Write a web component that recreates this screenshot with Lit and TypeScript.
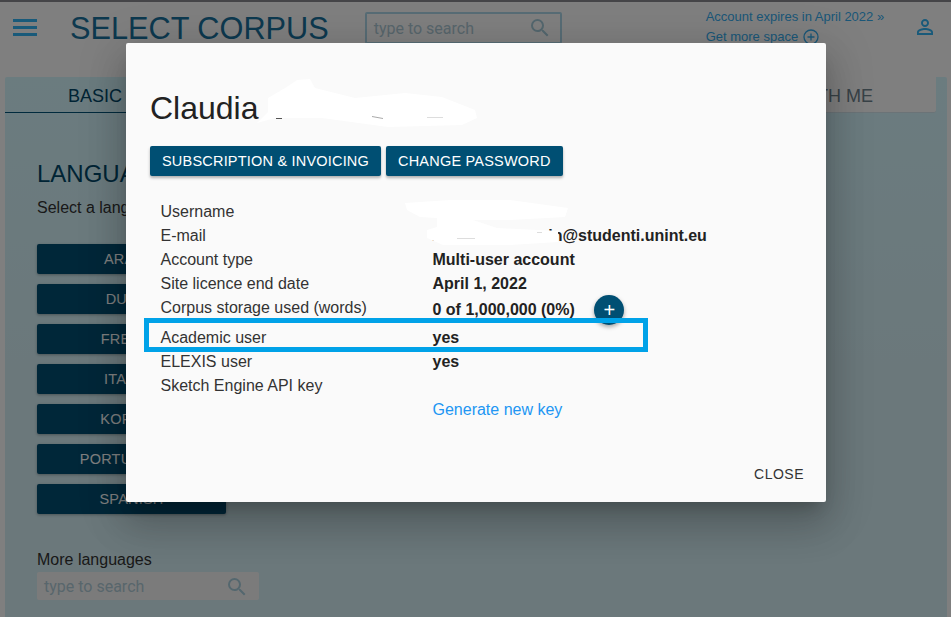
import { LitElement, html, css, svg } from "lit";
import { customElement } from "lit/decorators.js";

const searchIcon = svg`<svg class="search-ico" viewBox="0 0 24 24" width="24" height="24" fill="currentColor"><path d="M15.5 14h-.79l-.28-.27A6.47 6.47 0 0 0 16 9.5 6.5 6.5 0 1 0 9.5 16c1.61 0 3.09-.59 4.23-1.57l.27.28v.79l5 4.99L20.49 19l-4.99-5zm-6 0C7.01 14 5 11.99 5 9.5S7.01 5 9.5 5 14 7.01 14 9.5 11.99 14 9.5 14z"/></svg>`;

const rows: [string, string][] = [
  ["Username", ""],
  ["E-mail", "xxxxxxxxxxxxxin@studenti.unint.eu"],
  ["Account type", "Multi-user account"],
  ["Site licence end date", "April 1, 2022"],
];

@customElement("app-root")
export class AppRoot extends LitElement {
  static styles = css`
    :host {
      display: block;
      position: relative;
      height: 617px;
      overflow: hidden;
      background: #fff;
      font-family: "Liberation Sans", Arial, sans-serif;
      color: #222;
    }
    .page { display: flex; flex-direction: column; height: 617px; }
    .topline { height: 2px; background: #8a8a90; flex: none; }
    header {
      display: flex;
      align-items: flex-start;
      height: 75px;
      flex: none;
    }
    .burger { display: flex; flex-direction: column; gap: 4px; width: 24px; margin: 17px 0 0 13px; }
    .burger i { display: block; height: 3px; background: #33b5f5; }
    h1 { margin: 9px 0 0 33px; font-size: 30.7px; line-height: 36px; font-weight: 400; color: #1a729e; white-space: nowrap; }
    .top-search {
      box-sizing: border-box;
      display: flex;
      align-items: center;
      justify-content: space-between;
      width: 197px;
      height: 32px;
      margin: 10px 0 0 36px;
      padding: 0 8px 0 7px;
      border: 2px solid #afd9ea;
      border-radius: 2px;
    }
    .ph { font-family: Roboto, sans-serif; font-size: 16px; color: #b0ccd8; }
    .search-ico { color: #a8cedd; display: block; }
    .account { margin: 5px 0 0 144px; font-size: 13px; line-height: 20px; color: #36aef0; width: 183px; flex: none; }
    .account div { display: flex; align-items: center; gap: 5px; white-space: nowrap; }
    .user { margin: 13px 0 0 24px; color: #33b5f5; display: block; flex: none; }
    .panel {
      flex: 1;
      margin: 0 4px 0 5px;
      background: linear-gradient(#d6f8ff, #d6f0f6 60%);
      border-radius: 2px 2px 0 0;
    }
    .tabs { display: flex; height: 36px; margin-right: 11px; }
    .tab { font-size: 18px; line-height: 38px; text-align: center; box-sizing: border-box; color: #5a7280; }
    .tab.on { width: 180px; border-bottom: 1px solid #00557a; color: #00486a; }
    .tab.mid { flex: 1; background: #fff; }
    .tab.last { width: 266px; padding-right: 18px; background: #fff; border-bottom: 1px solid #d6e6ee; border-radius: 0 0 3px 0; color: #70848e; }
    .body { padding: 46px 0 0 32px; }
    h2 { margin: 0; font-size: 24px; line-height: 30px; font-weight: 400; color: #00486a; }
    .sub { font-size: 16px; line-height: 20px; margin-top: 9px; color: #333; }
    .langs { display: flex; flex-direction: column; gap: 10px; margin-top: 26px; width: 189px; }
    .lang {
      height: 30px;
      line-height: 30px;
      text-align: center;
      font-size: 14.5px;
      letter-spacing: .2px;
      color: #fff;
      background: #004f73;
      border-radius: 2px;
      box-shadow: 0 1px 3px rgba(0,0,0,.3);
    }
    .more { margin-top: 36px; font-size: 16px; line-height: 20px; color: #333; }
    .more-search {
      box-sizing: border-box;
      width: 222px;
      height: 28px;
      margin-top: 2px;
      padding: 1px 10px 0 7px;
      display: flex;
      align-items: center;
      justify-content: space-between;
      background: #f7f7f7;
      border-radius: 2px;
    }
    .scrim { position: absolute; inset: 0; background: rgba(0,0,0,.5); }
    .modal {
      position: absolute;
      left: 126px;
      top: 43px;
      width: 700px;
      height: 459px;
      box-sizing: border-box;
      background: #fafafa;
      border-radius: 2px;
      padding: 46px 24px 0;
      box-shadow: 0 11px 15px -7px rgba(0,0,0,.2), 0 24px 38px 3px rgba(0,0,0,.14), 0 9px 46px 8px rgba(0,0,0,.12);
    }
    .name { font-size: 32px; line-height: 38px; color: #222; }
    .actions { display: flex; gap: 5px; margin-top: 19px; }
    .btn {
      height: 30px;
      line-height: 30px;
      padding: 0 12px;
      font-size: 14.5px;
      letter-spacing: .2px;
      color: #fff;
      background: #004f73;
      border-radius: 2px;
      box-shadow: 0 2px 3px rgba(0,0,0,.3);
      white-space: nowrap;
    }
    .grid { margin: 24px 0 0 10.5px; font-size: 16px; line-height: 24px; color: #333; }
    .row { display: grid; grid-template-columns: 272px 1fr; height: 24px; white-space: nowrap; }
    .row b { color: #222; font-weight: 700; }
    .row.tall { height: 30px; }
    .val { display: flex; align-items: flex-start; padding-top: 2px; }
    .plus {
      width: 30px;
      height: 30px;
      margin: -3px 0 0 19.5px;
      border-radius: 50%;
      background: #004f73;
      color: #fff;
      font-size: 20px;
      line-height: 30px;
      text-align: center;
      box-shadow: 0 2px 4px rgba(0,0,0,.35);
      flex: none;
    }
    a { color: #2196f3; text-decoration: none; }
    .close {
      position: absolute;
      right: 22px;
      bottom: 18px;
      font-size: 14px;
      letter-spacing: .5px;
      line-height: 20px;
      color: #333;
    }
    .mask { position: absolute; left: 0; top: 0; pointer-events: none; }
    .mark {
      position: absolute;
      left: 144px;
      top: 318px;
      width: 504px;
      height: 34px;
      box-sizing: border-box;
      border: 5px solid #00a2e8;
      pointer-events: none;
    }
  `;

  render() {
    return html`
      <div class="page">
        <div class="topline"></div>
        <header>
          <div class="burger"><i></i><i></i><i></i></div>
          <h1>SELECT CORPUS</h1>
          <div class="top-search"><span class="ph">type to search</span>${searchIcon}</div>
          <div class="account">
            <div>Account expires in April 2022 »</div>
            <div>Get more space
              <svg width="16" height="16" viewBox="0 0 16 16" fill="none" stroke="currentColor" stroke-width="1.3"><circle cx="8" cy="8" r="7"/><path d="M8 4.5v7M4.5 8h7"/></svg>
            </div>
          </div>
          <svg class="user" width="24" height="24" viewBox="0 0 24 24" fill="currentColor"><path d="M12 5.9a2.1 2.1 0 1 1 0 4.2 2.1 2.1 0 0 1 0-4.2m0 9c2.97 0 6.1 1.46 6.1 2.1v1.1H5.9V17c0-.64 3.13-2.1 6.1-2.1M12 4C9.79 4 8 5.79 8 8s1.79 4 4 4 4-1.79 4-4-1.79-4-4-4zm0 9c-2.67 0-8 1.34-8 4v3h16v-3c0-2.66-5.33-4-8-4z"/></svg>
        </header>
        <section class="panel">
          <div class="tabs">
            <div class="tab on">BASIC</div>
            <div class="tab mid">MY CORPORA</div>
            <div class="tab last">SHARED WITH ME</div>
          </div>
          <div class="body">
            <h2>LANGUAGES</h2>
            <div class="sub">Select a language</div>
            <div class="langs">
              ${["ARABIC", "DUTCH", "FRENCH", "ITALIAN", "KOREAN", "PORTUGUESE", "SPANISH"].map(
                (l) => html`<div class="lang">${l}</div>`
              )}
            </div>
            <div class="more">More languages</div>
            <div class="more-search"><span class="ph">type to search</span>${searchIcon}</div>
          </div>
        </section>
      </div>
      <div class="scrim"></div>
      <div class="modal">
        <div class="name">Claudia</div>
        <div class="actions">
          <div class="btn">SUBSCRIPTION &amp; INVOICING</div>
          <div class="btn">CHANGE PASSWORD</div>
        </div>
        <div class="grid">
          ${rows.map(([k, v]) => html`<div class="row"><span>${k}</span><b>${v}</b></div>`)}
          <div class="row tall"><span>Corpus storage used (words)</span><div class="val"><b>0 of 1,000,000 (0%)</b><div class="plus">+</div></div></div>
          <div class="row"><span>Academic user</span><b>yes</b></div>
          <div class="row"><span>ELEXIS user</span><b>yes</b></div>
          <div class="row"><span>Sketch Engine API key</span><b></b></div>
          <div class="row"><span></span><a>Generate new key</a></div>
        </div>
        <div class="close">CLOSE</div>
      </div>
      <svg class="mask" width="951" height="617" viewBox="0 0 951 617" fill="#fff" stroke="none">
        <path d="M257 123 L268 112 L268 98 L285 88 L297 80 L310 79 L315 88 L355 98 L405 93 L442 97 L475 110 L477 118 L462 125 L388 127 L322 118 L275 118 Z"/>
        <path d="M405 203 L450 200 L510 200 L568 208 L565 217 L510 220 L473 220 L497 228 L558 231 L558 242 L510 245 L443 245 L427 238 L427 230 L437 227 L437 218 L420 217 L407 210 Z"/>
        <g fill="none" stroke-width="1">
          <path d="M276 118.5h6" stroke="#555"/>
          <path d="M372 116.5l11 2" stroke="#aaa"/>
          <path d="M427 117.5h16" stroke="#ddd"/>
          <path d="M457 238.5h18" stroke="#ddd"/>
          <path d="M537 232.5h5" stroke="#ddd"/>
        </g>
      </svg>
      <div class="mark"></div>
    `;
  }
}
